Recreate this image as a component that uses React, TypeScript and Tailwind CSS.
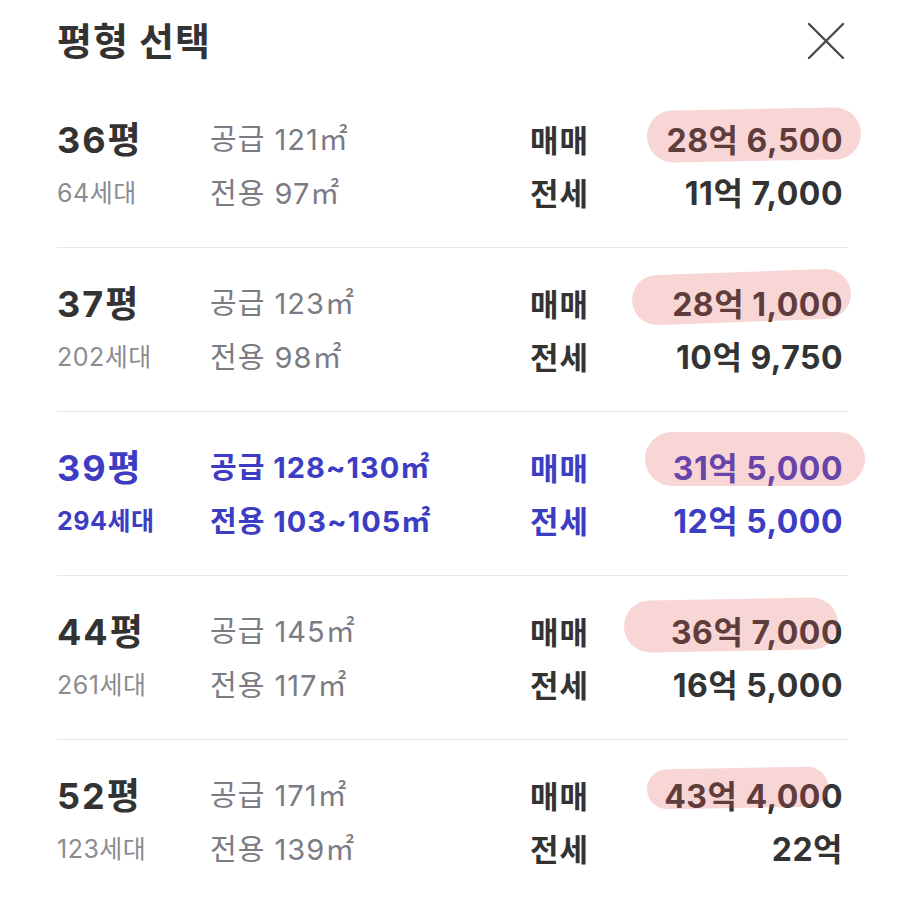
interface Pyeong {
  pyeong: string;
  units: string;
  supply: string;
  exclusive: string;
  sale: string;
  jeonse: string;
  hl: string;
  active?: boolean;
}

const rows: Pyeong[] = [
  {
    pyeong: "36평",
    units: "64세대",
    supply: "공급 121㎡",
    exclusive: "전용 97㎡",
    sale: "28억 6,500",
    jeonse: "11억 7,000",
    hl: "-left-[20px] -right-[18px] -top-[10px] bottom-0 -rotate-1",
  },
  {
    pyeong: "37평",
    units: "202세대",
    supply: "공급 123㎡",
    exclusive: "전용 98㎡",
    sale: "28억 1,000",
    jeonse: "10억 9,750",
    hl: "-left-[40px] -right-[8px] -top-[11px] bottom-[3px] -rotate-2",
  },
  {
    pyeong: "39평",
    units: "294세대",
    supply: "공급 128~130㎡",
    exclusive: "전용 103~105㎡",
    sale: "31억 5,000",
    jeonse: "12억 5,000",
    hl: "-left-[28px] -right-[22px] -top-[15px] bottom-[3px]",
    active: true,
  },
  {
    pyeong: "44평",
    units: "261세대",
    supply: "공급 145㎡",
    exclusive: "전용 117㎡",
    sale: "36억 7,000",
    jeonse: "16억 5,000",
    hl: "-left-[47px] right-[5px] -top-[12px] bottom-[2px] -rotate-1",
  },
  {
    pyeong: "52평",
    units: "123세대",
    supply: "공급 171㎡",
    exclusive: "전용 139㎡",
    sale: "43억 4,000",
    jeonse: "22억",
    hl: "-left-[17px] right-[15px] -top-[7px] bottom-[9px] -rotate-1",
  },
];

export default function App() {
  return (
    <div
      className="w-[900px] h-[898px] bg-white overflow-hidden pl-[57px] pr-[57px]"
      style={{ fontFamily: 'Inter, "Noto Sans CJK KR", sans-serif' }}
    >
      {/* Header */}
      <div className="h-[84px] flex items-center justify-between">
        <h1 className="text-[38px] font-bold text-[#333333] tracking-[1px] -mt-[2px]">평형 선택</h1>
        <svg width="38" height="38" viewBox="0 0 38 38" className="-mr-[2px] -mt-[3px]">
          <path d="M2 2 L36 36 M36 2 L2 36" stroke="#4a4a4a" strokeWidth="2.4" strokeLinecap="round" />
        </svg>
      </div>

      {rows.map((r, i) => {
        const main = r.active ? "text-[#3d3dc4]" : "text-[#333333]";
        const sub = r.active ? "text-[#3d3dc4] font-bold" : "text-[#8b8b90]";
        const area = r.active ? "text-[#3d3dc4] font-bold" : "text-[#7b7b83]";
        return (
          <div key={r.pyeong}>
            {i > 0 && <div className="h-px bg-[#e8e8ec] mr-[-5px]" />}
            <div className="pt-[29px] pb-[26px] flex">
              {/* 평형 */}
              <div className="w-[153px]">
                <div className={`h-[54px] flex items-center text-[36px] tracking-[2px] font-bold ${main}`}>{r.pyeong}</div>
                <div className={`h-[54px] flex items-center text-[25px] tracking-[0.5px] ${sub}`}>{r.units}</div>
              </div>
              {/* 면적 */}
              <div className="w-[320px]">
                <div className={`h-[54px] flex items-center text-[29px] tracking-[1px] ${area}`}>{r.supply}</div>
                <div className={`h-[54px] flex items-center text-[29px] tracking-[1px] ${area}`}>{r.exclusive}</div>
              </div>
              {/* 가격 */}
              <div className={`flex-1 font-bold ${main}`}>
                <div className="h-[54px] flex items-center justify-between">
                  <span className="text-[31px] tracking-[1px] pt-[2px]">매매</span>
                  <span className="relative text-[32px] tracking-[0.5px] leading-[40px] pt-[2px]">
                    {r.sale}
                    <span className={`absolute rounded-full bg-[#e35a5a]/25 ${r.hl}`} />
                  </span>
                </div>
                <div className="h-[54px] flex items-center justify-between">
                  <span className="text-[31px] tracking-[1px]">전세</span>
                  <span className="text-[32px] tracking-[0.5px]">{r.jeonse}</span>
                </div>
              </div>
            </div>
          </div>
        );
      })}
    </div>
  );
}
